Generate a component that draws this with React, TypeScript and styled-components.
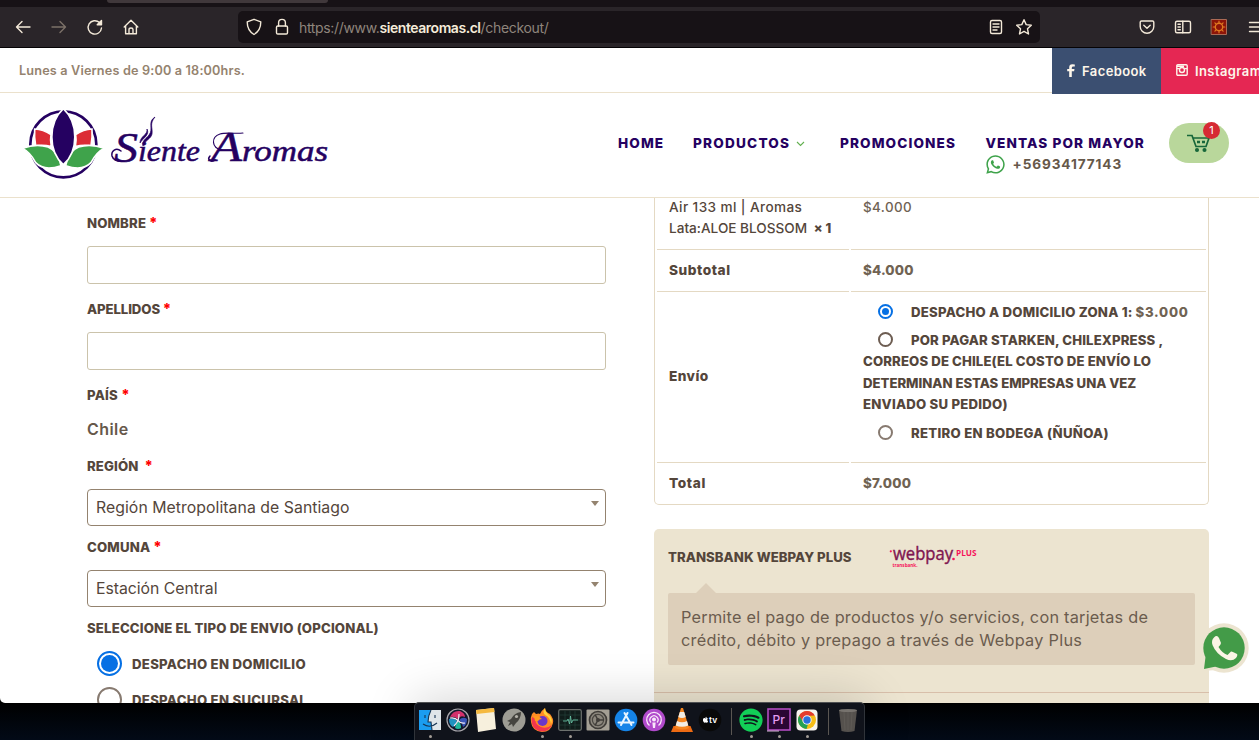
import React from "react";
import styled, { createGlobalStyle, css } from "styled-components";
import { FaWhatsapp, FaApple, FaSpotify } from "react-icons/fa";

const GlobalStyle = createGlobalStyle`
  * { box-sizing: border-box; }
  body { margin: 0; overflow: hidden; background: #02060f; }
  ul { list-style: none; margin: 0; padding: 0; }
`;

const ink = "#54463b";
const price = "#706353";
const line = "#e4d9c3";
const purple = "#250161";

const Desktop = styled.div`
  position: relative;
  width: 1259px;
  height: 740px;
  overflow: hidden;
  background: linear-gradient(#000 703px, #020a17 740px);
  font-family: Inter, "Liberation Sans", sans-serif;
  color: ${ink};
`;

const BrowserWindow = styled.div`
  display: flex;
  flex-direction: column;
  height: 703px;
  overflow: hidden;
  border-radius: 0 0 0 5px;
  background: #fff;
`;

/* ---------- browser chrome ---------- */

const TabStrip = styled.div`
  flex: none;
  height: 7px;
  padding-left: 107px;
  background: #171216;
`;

const ActiveTab = styled.div`
  width: 221px;
  height: 3px;
  border-radius: 0 0 4px 4px;
  background: #40383b;
`;

const Toolbar = styled.div`
  flex: none;
  display: flex;
  align-items: center;
  height: 41px;
  background: #2a2529;
  border-bottom: 1px solid #050305;
  color: #f4ead9;
`;

const NavButtons = styled.div`
  flex: none;
  display: flex;
  gap: 16px;
  width: 238px;
  padding-left: 13px;
`;

const ToolIcon = styled.svg<{ $dim?: boolean }>`
  flex: none;
  width: 20px;
  height: 20px;
  fill: none;
  stroke: ${(p) => (p.$dim ? "#7c7168" : "#f4ead9")};
  stroke-width: 1.4;
  stroke-linecap: round;
  stroke-linejoin: round;
`;

const AddressBar = styled.div`
  flex: none;
  display: flex;
  align-items: center;
  width: 802px;
  height: 32px;
  padding: 0 6px;
  gap: 8px;
  border-radius: 5px;
  background: #171216;
`;

const Url = styled.div`
  flex: 1;
  margin-left: -1px;
  font-size: 14px;
  letter-spacing: -0.34px;
  color: #8f857c;
  white-space: nowrap;

  b {
    font-weight: 600;
    letter-spacing: -0.45px;
    color: #f6ecda;
  }
`;

const Extensions = styled.div`
  flex: none;
  display: flex;
  gap: 16px;
  padding-left: 97px;
`;

/* ---------- site header ---------- */

const TopBar = styled.div`
  flex: none;
  display: flex;
  justify-content: space-between;
  height: 45px;
  padding-left: 19px;
  border-bottom: 1px solid #ebe1cc;
`;

const Hours = styled.span`
  font-size: 12.7px;
  font-weight: 600;
  letter-spacing: 0.15px;
  line-height: 45px;
  color: #95836f;
`;

const Socials = styled.div`
  display: flex;
  width: 207px;
  height: 46px;
`;

const Social = styled.a<{ $bg: string; $width: number }>`
  flex: none;
  display: flex;
  align-items: center;
  gap: 7px;
  width: ${(p) => p.$width}px;
  padding-left: 15px;
  background: ${(p) => p.$bg};
  color: #fdf6ea;
  font-size: 13px;
  font-weight: 600;
  letter-spacing: 0.4px;

  svg { flex: none; position: relative; top: -1px; }
`;

const Header = styled.header`
  flex: none;
  display: flex;
  height: 105px;
  padding-left: 23px;
  border-bottom: 1px solid #ebe1cc;
`;

const Logo = styled.svg`
  flex: none;
  width: 595px;
  height: 104px;
`;

const Menu = styled.nav`
  display: flex;
  padding-top: 40px;
`;

const MenuItem = styled.div<{ $width: number; $spacing: number }>`
  width: ${(p) => p.$width}px;
  color: ${purple};
  font-size: 13.6px;
  font-weight: 800;
  letter-spacing: ${(p) => p.$spacing}px;
  line-height: 21px;
  white-space: nowrap;
`;

const Chevron = styled.svg`
  margin-left: 6px;
  vertical-align: 1px;
`;

const Phone = styled.div`
  display: flex;
  align-items: center;
  gap: 7px;
  margin-left: -1px;
  color: #66584a;
  font-weight: 700;
  letter-spacing: 0.9px;

  svg { color: #3fa34b; }
`;

const CartButton = styled.div`
  position: relative;
  display: grid;
  place-items: center;
  width: 60px;
  height: 40px;
  margin-top: 30px;
  padding-right: 2px;
  border-radius: 20px;
  background: #b9d79b;
`;

const CartCount = styled.span`
  position: absolute;
  top: -1px;
  left: 34px;
  width: 17px;
  height: 17px;
  border-radius: 50%;
  background: #d62a33;
  color: #fff;
  font-size: 11px;
  line-height: 17px;
  text-align: center;
`;

/* ---------- checkout ---------- */

const Checkout = styled.main`
  flex: 1;
  min-height: 0;
  display: flex;
  align-items: flex-start;
  gap: 48px;
  padding-left: 87px;
  overflow: hidden;
`;

const Billing = styled.form`
  flex: none;
  width: 519px;
  padding-top: 14px;
`;

const Field = styled.div<{ $gap?: number }>`
  margin-bottom: ${(p) => p.$gap ?? 14}px;
`;

const Label = styled.label<{ $spacing?: number }>`
  display: block;
  margin-bottom: 12px;
  font-size: 13.2px;
  font-weight: 800;
  letter-spacing: ${(p) => p.$spacing ?? 0.13}px;
  line-height: 22px;
  white-space: pre;
`;

const Required = styled.abbr`
  color: #f00;
  font-size: 14.5px;
`;

const TextInput = styled.input`
  display: block;
  width: 100%;
  height: 38px;
  border: 1px solid #cbc3ab;
  border-radius: 3px;
  background: #fff;
`;

const Country = styled.strong`
  display: block;
  padding-bottom: 1px;
  font-size: 16px;
  font-weight: 600;
  letter-spacing: 0.45px;
  line-height: 22px;
  color: #66584a;
`;

const Select = styled.div<{ $spacing: number }>`
  display: flex;
  justify-content: space-between;
  height: 37px;
  padding: 0 6px 0 8px;
  border: 1px solid #94836f;
  border-radius: 4px;
  font-size: 15.8px;
  letter-spacing: ${(p) => p.$spacing}px;
  line-height: 35px;
`;

const Caret = styled.i`
  margin-top: 11px;
  width: 0;
  height: 0;
  border: 4px solid transparent;
  border-top: 5px solid #94836f;
  border-bottom: 0;
`;

const DeliveryOption = styled.div`
  display: flex;
  align-items: center;
  gap: 10px;
  height: 25px;
  margin: 0 0 11px 10px;
  font-size: 13.2px;
  font-weight: 800;
  letter-spacing: 0.28px;
`;

const Radio = styled.span<{ $size: number; $on?: boolean; $tone?: string }>`
  flex: none;
  display: inline-block;
  width: ${(p) => p.$size}px;
  height: ${(p) => p.$size}px;
  border: 2px solid ${(p) => (p.$on ? "#0670e4" : p.$tone ?? "#877a70")};
  border-radius: 50%;
  ${(p) =>
    p.$on &&
    css`
      padding: 2px;
      background: #0670e4 content-box;
    `}
`;

const Sidebar = styled.aside`
  flex: none;
  width: 555px;
`;

const OrderTable = styled.section`
  padding: 0 2px;
  border: 1px solid ${line};
  border-top: 0;
  border-radius: 0 0 5px 5px;
`;

const OrderRow = styled.div<{ $height: number; $first?: boolean }>`
  display: grid;
  grid-template-columns: 192px 1fr;
  column-gap: 2px;
  height: ${(p) => p.$height}px;

  > * {
    display: flex;
    align-items: ${(p) => (p.$first ? "flex-start" : "center")};
    padding-left: 12px;
    border-top: ${(p) => (p.$first ? 0 : 1)}px solid ${line};
  }
`;

const Product = styled.div`
  margin-top: -1px;
  font-size: 13.6px;
  font-weight: 500;
  line-height: 21.3px;
  white-space: nowrap;

  b { margin-left: 3px; font-size: 13px; font-weight: 800; }
`;

const Spaced = styled.span<{ $spacing: number }>`
  letter-spacing: ${(p) => p.$spacing}px;
`;

const RowTitle = styled.div<{ $spacing: number }>`
  padding-bottom: 2px;
  font-size: 13.7px;
  font-weight: 800;
  letter-spacing: ${(p) => p.$spacing}px;
`;

const Amount = styled.div<{ $weight?: number; $spacing?: number }>`
  font-size: 13.4px;
  font-weight: ${(p) => p.$weight ?? 800};
  letter-spacing: ${(p) => p.$spacing ?? 0.15}px;
  line-height: 19px;
  color: ${price};
`;

const ShippingList = styled.ul`
  display: flex;
  flex-direction: column;
  gap: 6.8px;
  padding-top: 9.6px;
`;

const ShippingCell = styled.div`
  && { align-items: flex-start; }
`;

const ShippingOption = styled.li`
  font-size: 13.2px;
  font-weight: 800;
  line-height: 21.5px;
  white-space: nowrap;

  ${Radio} { margin: 0 18px 0 15px; vertical-align: -2px; }
`;

const ShippingCost = styled.span`
  letter-spacing: 0.75px;
  color: ${price};
`;

const Payment = styled.section`
  height: 240px;
  margin-top: 24px;
  border-radius: 5px;
  background: #ece4d0;
`;

const Method = styled.div`
  display: flex;
  align-items: center;
  height: 54px;
  padding-left: 14px;
`;

const MethodName = styled.span`
  width: 220px;
  padding-top: 2px;
  font-size: 13.2px;
  font-weight: 800;
  letter-spacing: 0.04px;
`;

const Notch = styled.div`
  width: 0;
  margin-left: 42px;
  border: 10px solid transparent;
  border-top: 0;
  border-bottom-color: #ddcfba;
`;

const Description = styled.p`
  height: 72px;
  margin: 0 14px 27px;
  padding: 13px;
  border-radius: 2px;
  background: #ddcfba;
  color: #6b5c4e;
  font-size: 16.3px;
  line-height: 23px;
  white-space: nowrap;
`;

const Divider = styled.div`
  height: 1px;
  background: #d8bfaa;
`;

const ChatBubble = styled.svg`
  position: absolute;
  left: 1199px;
  top: 622px;
  width: 52px;
  height: 52px;
`;

/* ---------- dock ---------- */

const Dock = styled.div`
  position: absolute;
  left: 414px;
  top: 702px;
  display: flex;
  width: 451px;
  height: 42px;
  padding: 5px 1px 0;
  border: 1px solid #4e5052;
  border-left-color: #30343a;
  border-right-color: #30343a;
  border-radius: 5px 5px 0 0;
  background: #10131b;
  box-shadow: 0 0 50px rgba(0, 0, 0, 0.2);
`;

const DockItem = styled.div<{ $running?: boolean }>`
  flex: none;
  display: flex;
  flex-direction: column;
  align-items: center;
  gap: 3px;
  width: 28px;

  > svg { display: block; width: 24px; height: 24px; }

  &::after {
    content: "";
    width: 3px;
    height: 3px;
    border-radius: 50%;
    background: ${(p) => (p.$running ? "#a39d96" : "transparent")};
  }
`;

const DockSeparator = styled.div`
  flex: none;
  width: 1px;
  height: 27px;
  margin: 0 5px 0 7px;
  background: #5a5652;
`;

const GreenApp = styled(FaSpotify)`
  color: #12ce57;
`;

function BrandLogo() {
  return (
    <Logo viewBox="23 93 595 104">
      <g transform="translate(10 95) scale(0.33333)">
        <circle cx="160" cy="148" r="99" fill="none" stroke={purple} strokeWidth="8" />
        <g stroke="#fff" strokeWidth="5">
          <path d="M74 102Q100 103 123 119Q120 136 124 155Q99 148 77 153Q72 128 74 102Z" fill="#dc2c35" />
          <path d="M246 102Q220 103 197 119Q200 136 196 155Q221 148 243 153Q248 128 246 102Z" fill="#dc2c35" />
          <path d="M37 160Q78 145 114 156Q145 168 153 212Q103 230 77 203Q60 171 37 160Z" fill="#3fa34b" />
          <path d="M283 160Q242 145 206 156Q175 168 167 212Q217 230 243 203Q260 171 283 160Z" fill="#3fa34b" />
          <path d="M160 41C206 84 206 168 160 209C114 168 114 84 160 41Z" fill={purple} />
        </g>
      </g>
      <g fill={purple} stroke={purple} strokeWidth="0.5" fontFamily="'Liberation Serif', serif" fontStyle="italic">
        <text x="114" y="161.5" fontSize="43" textLength="24" lengthAdjust="spacingAndGlyphs">S</text>
        <text x="138" y="161" fontSize="30" textLength="62" lengthAdjust="spacingAndGlyphs">iente</text>
        <text x="211" y="161" fontSize="43" textLength="31" lengthAdjust="spacingAndGlyphs">A</text>
        <text x="242" y="161" fontSize="30" textLength="86" lengthAdjust="spacingAndGlyphs">romas</text>
      </g>
      <g fill="none" stroke={purple} strokeWidth="1.5" strokeLinecap="round">
        <path d="M121 151C116 147 111 151 112 156C113 160 118 162 123 161" />
        <path d="M215 160C210 163 207 159 210 156" />
        <path d="M222 150C211 148 211 137 220 134C226 132 235 134 243 133" strokeWidth="1.1" />
      </g>
      <path d="M155 117C147 122 154 129 149 135C146 139 142 140 143 146C145 140 151 139 152 134C153 128 149 124 155 117ZM147 129C148 135 140 136 140 143C143 138 150 135 147 129Z" fill={purple} stroke={purple} strokeWidth="0.7" />
    </Logo>
  );
}

function WebpayLogo() {
  return (
    <svg width="92" height="28" viewBox="888 542 92 28" fontFamily="'Open Sans', sans-serif">
      <circle cx="890.8" cy="551.3" r="1.1" fill="#f5145b" />
      <text x="893" y="560" fontSize="17.5" fill="#7f1650" stroke="#7f1650" strokeWidth="0.4" textLength="60" lengthAdjust="spacingAndGlyphs">webpay</text>
      <circle cx="953.5" cy="559" r="1.3" fill="#f5145b" />
      <text x="956" y="556" fontSize="8.8" fontWeight="700" fill="#f5145b" textLength="20.5" lengthAdjust="spacingAndGlyphs">PLUS</text>
      <text x="892.5" y="567" fontSize="5.6" fontWeight="700" fill="#f5145b" textLength="25" lengthAdjust="spacingAndGlyphs">transbank.</text>
    </svg>
  );
}

function DockApps() {
  return (
    <>
      <DockItem $running>
        <svg viewBox="0 0 24 24">
          <rect x="1" y="2" width="22" height="20" fill="#dfe6ea" />
          <path d="M1 2H13Q10 8 10 14H13L14 22H1Z" fill="#1b9df0" />
          <path d="M13 2Q10 8 10 14H13L14 22M5 16Q12 21 19 15M7 7v3M17 7v3" fill="none" stroke="#163655" strokeWidth="1.1" />
        </svg>
      </DockItem>
      <DockItem>
        <svg viewBox="0 0 24 24">
          <circle cx="12" cy="12" r="11" fill="#14172b" stroke="#aaa8ac" strokeWidth="1.2" />
          <path d="M4 9Q7 2 14 3Q19 5 19 9Q14 7 12 11Q8 8 4 9Z" fill="#d3306b" />
          <path d="M13 12Q17 8 21 11Q21 17 17 19Q16 14 13 12Z" fill="#3b55b8" />
          <path d="M3 11Q8 9 11 13Q9 18 7 19Q3 17 3 11Z" fill="#2193c0" />
          <path d="M12 13Q15 15 15 20Q12 22 9 20Q10 15 12 13Z" fill="#21b89b" />
          <path d="M4 10Q9 9 12 12.5T19 15M13 6Q13 10 12 12.5T8 18" stroke="#f3eaf5" strokeWidth="1.2" fill="none" />
        </svg>
      </DockItem>
      <DockItem>
        <svg viewBox="0 0 24 24">
          <path d="M2 2L20 0L22 21L4 24Z" fill="#f7f0dd" />
          <path d="M2 2L20 0L20.5 4L2.5 6Z" fill="#f5b93f" />
        </svg>
      </DockItem>
      <DockItem>
        <svg viewBox="0 0 24 24">
          <circle cx="12" cy="12" r="11.5" fill="#9d9c94" />
          <path d="M19 4Q12 5 9 11L5 13L8 14L6 18L10 16L11 19L14 15Q19 11 19 4Z" fill="#45443f" />
          <circle cx="14.5" cy="8.5" r="1.6" fill="#b5b3aa" />
        </svg>
      </DockItem>
      <DockItem $running>
        <svg viewBox="0 0 24 24">
          <path d="M2 6L4 4L6 6Q9 5 10 6Q12 2 15 0Q15 3 18 5L20 6Q24 11 23 15Q21 24 12 24Q2 23 1 14Q0 10 2 6Z" fill="#ff8b24" />
          <path d="M2 9Q0 20 9 23Q18 25 22 17Q17 21 11 19Q4 16 6 11Z" fill="#f2364d" />
          <path d="M15 0Q15 4 20 8Q23 12 21 16Q20 9 15 7Q12 4 15 0Z" fill="#ffd33d" />
          <circle cx="12.5" cy="13" r="5" fill="#6a36c8" />
          <path d="M4 8Q8 7 12 11Q9 11 8 13L5 13Z" fill="#ff9a1e" />
        </svg>
      </DockItem>
      <DockItem $running>
        <svg viewBox="0 0 24 24">
          <rect x=".7" y="1.7" width="22.6" height="20.6" rx="1.5" fill="#101c1a" stroke="#6d716e" strokeWidth="1.2" />
          <path d="M2 7H22M2 12H22M2 17H22M7 3V21M12 3V21M17 3V21" stroke="#23403a" strokeWidth=".7" />
          <path d="M5 13H9L10 11L11.5 16L12.5 8L13.5 15L15 12H20" fill="none" stroke="#6cc9aa" strokeWidth=".8" />
        </svg>
      </DockItem>
      <DockItem>
        <svg viewBox="0 0 24 24">
          <rect x=".5" y="1.5" width="23" height="21" rx="1" fill="#a49f94" />
          <circle cx="12" cy="12" r="8.5" fill="#8c877d" stroke="#3f3c38" strokeWidth="1.7" />
          <circle cx="12" cy="12" r="5.6" fill="none" stroke="#4a4742" strokeWidth="1.2" />
          <path d="M12 12L18 12M12 12L9 6.5M12 12L9 17.5" stroke="#3f3c38" strokeWidth="1.5" />
          <circle cx="12" cy="12" r="2" fill="#3f3c38" />
        </svg>
      </DockItem>
      <DockItem>
        <svg viewBox="0 0 24 24">
          <circle cx="12" cy="12" r="11.3" fill="#1584e8" />
          <path d="M13.5 5L7 17M10.5 5L17.5 17M4.5 14.5H19.5" stroke="#e8f5ff" strokeWidth="2" strokeLinecap="round" />
        </svg>
      </DockItem>
      <DockItem>
        <svg viewBox="0 0 24 24">
          <circle cx="12" cy="12" r="11.3" fill="#b04acb" />
          <g fill="none" stroke="#f9e8fa" strokeWidth="1.3">
            <path d="M7.5 17.5A7.3 7.3 0 1 1 16.5 17.5M9 14.5A4 4 0 1 1 15 14.5" />
          </g>
          <circle cx="12" cy="11.5" r="2" fill="#f9e8fa" />
          <path d="M10.3 14.5H13.7L13 20H11Z" fill="#f9e8fa" />
        </svg>
      </DockItem>
      <DockItem>
        <svg viewBox="0 0 24 24">
          <path d="M3.5 18H20.5L23 24H1Z" fill="#ee6b13" />
          <path d="M11 0H13L19 20Q12 23 5 20Z" fill="#f68620" />
          <path d="M9.8 4H14.2L15.7 9Q12 11 8.3 9ZM7 13Q12 15.5 17 13L18.3 17.5Q12 20 5.7 17.5Z" fill="#f1ede5" />
        </svg>
      </DockItem>
      <DockItem>
        <svg viewBox="0 0 24 24">
          <circle cx="12" cy="12" r="11.3" fill="#090909" />
          <FaApple x={4} y={8.2} size={7} color="#fff" />
          <text x="11" y="15.2" fontSize="8.5" fontWeight="600" fill="#fff" fontFamily="Inter, sans-serif">tv</text>
        </svg>
      </DockItem>
      <DockSeparator />
      <DockItem $running><GreenApp /></DockItem>
      <DockItem $running>
        <svg viewBox="0 0 24 24">
          <rect x="1" y="1" width="22" height="21" fill="#2a0634" stroke="#b14cc0" strokeWidth="1.6" />
          <text x="5.5" y="16" fontSize="12" fontWeight="500" fill="#e39cf2" fontFamily="Inter, sans-serif" textLength="12.5">Pr</text>
          <path d="M0 23H12" stroke="#d4b7d4" />
        </svg>
      </DockItem>
      <DockItem $running>
        <svg viewBox="0 0 24 24">
          <rect x="1.5" y="1.5" width="21" height="21" rx="4" fill="#f8f4ee" />
          <circle cx="12" cy="12" r="9" fill="#f7bd16" />
          <path d="M4.2 7.5A9 9 0 0 1 19.8 7.5L12 8L8 14Z" fill="#e33b2e" />
          <path d="M4.2 7.5L8.5 14.5L13 16L11.5 21A9 9 0 0 1 4.2 7.5Z" fill="#25a153" />
          <circle cx="12" cy="12" r="4.7" fill="#f5f3ef" />
          <circle cx="12" cy="12" r="3.7" fill="#2a70dc" />
        </svg>
      </DockItem>
      <DockSeparator />
      <DockItem>
        <svg viewBox="0 0 24 24">
          <path d="M3 2H21L18.5 23Q12 25 5.5 23Z" fill="#55514d" />
          <path d="M8 4L9 22M12 4V22M16 4L15 22" stroke="#5f5b56" />
          <ellipse cx="12" cy="2.5" rx="9" ry="1.6" fill="#77736e" />
        </svg>
      </DockItem>
    </>
  );
}

export default function App() {
  return (
    <Desktop>
      <GlobalStyle />
      <BrowserWindow>
        <TabStrip><ActiveTab /></TabStrip>
        <Toolbar>
          <NavButtons>
            <ToolIcon viewBox="0 0 20 20"><path d="M17 10H3.5M9 4.5L3.5 10L9 15.5" /></ToolIcon>
            <ToolIcon viewBox="0 0 20 20" $dim><path d="M3 10H16.5M11 4.5L16.5 10L11 15.5" /></ToolIcon>
            <ToolIcon viewBox="0 0 20 20"><path d="M16.5 11A6.7 6.7 0 1 1 14.5 5.6L16 7.2" /><path d="M16.5 3.5V7.8H12.2Z" fill="#f4ead9" /></ToolIcon>
            <ToolIcon viewBox="0 0 20 20"><path d="M3.2 10L10 3.3L16.8 10M4.6 9V16.7H15.4V9M8 16.5V12.4Q8 11 10 11T12 12.4V16.5" /></ToolIcon>
          </NavButtons>
          <AddressBar>
            <ToolIcon viewBox="0 0 20 20"><path d="M10 2.3L16.8 4.8Q16.8 13.6 10 17.5Q3.2 13.6 3.2 4.8Z" /></ToolIcon>
            <ToolIcon viewBox="0 0 20 20"><rect x="4.5" y="9" width="11" height="8" rx="1.3" /><path d="M6.6 9V5.8A3.4 3.4 0 0 1 13.4 5.8V9" /></ToolIcon>
            <Url>https://www.<b>sientearomas.cl</b>/checkout/</Url>
            <ToolIcon viewBox="0 0 20 20"><rect x="4.5" y="3.5" width="11" height="13" rx="1.5" /><path d="M7 7H13M7 10H13M7 13H11" /></ToolIcon>
            <ToolIcon viewBox="0 0 20 20"><path d="M10 2.7L12.2 7.6L17.3 8.2L13.5 11.8L14.5 17L10 14.4L5.5 17L6.5 11.8L2.7 8.2L7.8 7.6Z" /></ToolIcon>
          </AddressBar>
          <Extensions>
            <ToolIcon viewBox="0 0 20 20"><path d="M4.5 4H15.5Q16.8 4 16.8 5.3V9.5A6.8 6.8 0 0 1 3.2 9.5V5.3Q3.2 4 4.5 4ZM6.8 8.3L10 11.3L13.2 8.3" /></ToolIcon>
            <ToolIcon viewBox="0 0 20 20"><rect x="2.5" y="4.2" width="15" height="11.6" rx="1.5" /><path d="M9.8 4.2V15.8M5 7.2H7.3M5 10H7.3M5 12.8H7.3" /></ToolIcon>
            <ToolIcon viewBox="0 0 20 20">
              <rect x="2.5" y="2.5" width="15" height="15" fill="#8d1508" stroke="#ab6a55" strokeWidth="1" />
              <circle cx="10" cy="10" r="3.7" stroke="#e07a20" />
              <path d="M10 4.2V6M10 14V15.8M4.2 10H6M14 10H15.8M5.9 5.9L7.1 7.1M12.9 12.9L14.1 14.1M5.9 14.1L7.1 12.9M12.9 7.1L14.1 5.9" stroke="#e07a20" strokeWidth="1.2" />
            </ToolIcon>
            <ToolIcon viewBox="0 0 20 20"><path d="M4.5 5.5H17M4.5 10H17M4.5 14.5H17" /></ToolIcon>
          </Extensions>
        </Toolbar>

        <TopBar>
          <Hours>Lunes a Viernes de 9:00 a 18:00hrs.</Hours>
          <Socials>
            <Social $bg="#3b4f71" $width={109}>
              <svg width="8" height="13" viewBox="0 0 8 13" fill="#fdf6ea"><path d="M2.2 13V7.3H.2V5H2.2V3.4Q2.2.3 5.3.3Q6.8.3 7.8.5V2.5H6.3Q4.8 2.5 4.8 3.8V5H7.5L7.1 7.3H4.8V13Z" /></svg>
              Facebook
            </Social>
            <Social $bg="#e52753" $width={110}>
              <svg width="12" height="12" viewBox="0 0 12 12" fill="none" stroke="#fdf6ea">
                <rect x=".8" y=".8" width="10.4" height="10.4" rx="1" strokeWidth="1.4" />
                <path d="M1 2.2H8M1 4.6H3.5M8.5 4.6H11" strokeWidth="1.4" />
                <circle cx="6" cy="6" r="2.5" fill="#e52753" strokeWidth="1.4" />
              </svg>
              Instagram
            </Social>
          </Socials>
        </TopBar>

        <Header>
          <BrandLogo />
          <Menu>
            <MenuItem $width={75} $spacing={1.1}>HOME</MenuItem>
            <MenuItem $width={147} $spacing={1.2}>
              PRODUCTOS
              <Chevron width="9" height="6" viewBox="0 0 9 6" fill="none" stroke="#62b04f" strokeWidth="1.1"><path d="M1 1L4.5 4.5L8 1" /></Chevron>
            </MenuItem>
            <MenuItem $width={145.5} $spacing={1.1}>PROMOCIONES</MenuItem>
            <MenuItem $width={183.5} $spacing={1.1}>
              VENTAS POR MAYOR
              <Phone><FaWhatsapp size={21} />+56934177143</Phone>
            </MenuItem>
          </Menu>
          <CartButton>
            <svg width="24" height="20" viewBox="0 0 24 20" fill="none" stroke="#17673a" strokeWidth="1.7">
              <path d="M1 2.5H6L10 13.5H20L23 5H7.5" />
              <path d="M11 9H14M16 9H19" strokeWidth="2.5" />
              <circle cx="11" cy="17" r="1.2" fill="#17673a" />
              <circle cx="18.5" cy="17" r="1.2" fill="#17673a" />
            </svg>
            <CartCount>1</CartCount>
          </CartButton>
        </Header>

        <Checkout>
          <Billing>
            <Field><Label>NOMBRE <Required>*</Required></Label><TextInput /></Field>
            <Field><Label $spacing={-0.1}>APELLIDOS <Required>*</Required></Label><TextInput /></Field>
            <Field><Label $spacing={0.25}>PAÍS <Required>*</Required></Label><Country>Chile</Country></Field>
            <Field $gap={10}>
              <Label>REGIÓN  <Required>*</Required></Label>
              <Select $spacing={0.05}>Región Metropolitana de Santiago<Caret /></Select>
            </Field>
            <Field $gap={10}>
              <Label $spacing={0.15}>COMUNA <Required>*</Required></Label>
              <Select $spacing={-0.03}>Estación Central<Caret /></Select>
            </Field>
            <Label $spacing={0.16}>SELECCIONE EL TIPO DE ENVIO (OPCIONAL)</Label>
            <DeliveryOption><Radio $size={25} $on />DESPACHO EN DOMICILIO</DeliveryOption>
            <DeliveryOption><Radio $size={25} />DESPACHO EN SUCURSAL</DeliveryOption>
          </Billing>

          <Sidebar>
            <OrderTable>
              <OrderRow $height={51} $first>
                <Product>
                  <div>
                    <Spaced $spacing={0.4}>Air 133 ml | Aromas</Spaced><br />
                    Lata:ALOE BLOSSOM <b>× 1</b>
                  </div>
                </Product>
                <Amount $weight={500} $spacing={0.4}>$4.000</Amount>
              </OrderRow>
              <OrderRow $height={42}>
                <RowTitle $spacing={0.55}>Subtotal</RowTitle>
                <Amount>$4.000</Amount>
              </OrderRow>
              <OrderRow $height={171}>
                <RowTitle $spacing={0.4}>Envío</RowTitle>
                <ShippingCell>
                  <ShippingList>
                    <ShippingOption>
                      <Radio $size={15} $on />
                      <Spaced $spacing={0.23}>DESPACHO A DOMICILIO ZONA 1:</Spaced> <ShippingCost>$3.000</ShippingCost>
                    </ShippingOption>
                    <ShippingOption>
                      <Radio $size={15} $tone="#6d5d52" />
                      <Spaced $spacing={0.13}>POR PAGAR STARKEN, CHILEXPRESS ,</Spaced><br />
                      <Spaced $spacing={0.12}>CORREOS DE CHILE(EL COSTO DE ENVÍO LO</Spaced><br />
                      <Spaced $spacing={-0.03}>DETERMINAN ESTAS EMPRESAS UNA VEZ</Spaced><br />
                      <Spaced $spacing={0.22}>ENVIADO SU PEDIDO)</Spaced>
                    </ShippingOption>
                    <ShippingOption>
                      <Radio $size={15} />
                      <Spaced $spacing={0.27}>RETIRO EN BODEGA (ÑUÑOA)</Spaced>
                    </ShippingOption>
                  </ShippingList>
                </ShippingCell>
              </OrderRow>
              <OrderRow $height={42}>
                <RowTitle $spacing={0.6}>Total</RowTitle>
                <Amount>$7.000</Amount>
              </OrderRow>
            </OrderTable>

            <Payment>
              <Method><MethodName>TRANSBANK WEBPAY PLUS</MethodName><WebpayLogo /></Method>
              <Notch />
              <Description>
                <Spaced $spacing={0.23}>Permite el pago de productos y/o servicios, con tarjetas de</Spaced><br />
                <Spaced $spacing={0.27}>crédito, débito y prepago a través de Webpay Plus</Spaced>
              </Description>
              <Divider />
            </Payment>
          </Sidebar>
        </Checkout>
      </BrowserWindow>

      <ChatBubble viewBox="0 0 52 52">
        <path d="M4 34L3 49L18 48Z" fill="#ece4d0" />
        <circle cx="25" cy="26" r="24.7" fill="#ece4d0" />
        <path d="M6.5 35L5 47L17 44.5Z" fill="#439b48" />
        <circle cx="25" cy="26" r="20.7" fill="#439b48" />
        <path d="M15 15.5Q18 12.5 20 16L22 21Q22 22.5 19.5 25Q23 31 28.5 33L32 29.5Q33 29 38 32Q39 33 37 36Q33 40 27 37Q17 32 13.5 23Q12 18 15 15.5Z" fill="#fbf5e6" />
      </ChatBubble>

      <Dock><DockApps /></Dock>
    </Desktop>
  );
}
